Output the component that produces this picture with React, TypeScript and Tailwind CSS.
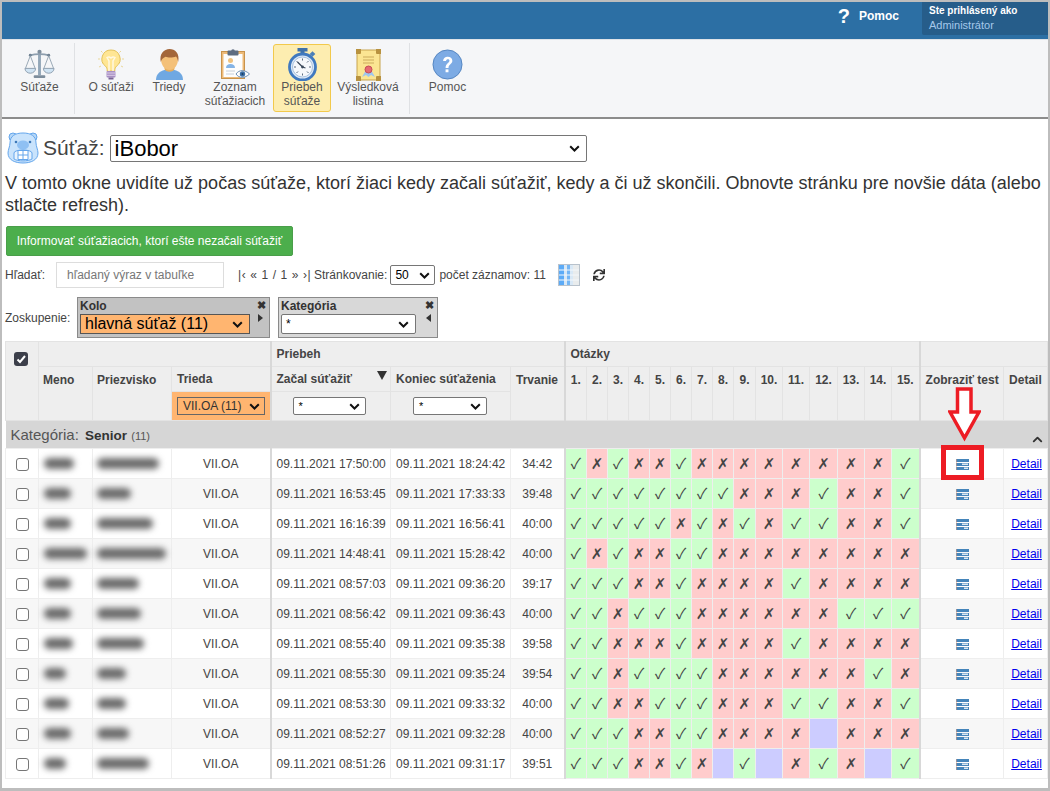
import React from "react";
import { ChevronUp } from "lucide-react";
import { FaSync } from "react-icons/fa";

const F = "font-['Liberation_Sans',Arial,sans-serif]";

type Row = { start: string; end: string; dur: string; a: string; n: number; s: number };
const rows: Row[] = [
  { start: "09.11.2021 17:50:00", end: "09.11.2021 18:24:42", dur: "34:42", a: "101001000000001", n: 30, s: 62 },
  { start: "09.11.2021 16:53:45", end: "09.11.2021 17:33:33", dur: "39:48", a: "111111110001001", n: 27, s: 34 },
  { start: "09.11.2021 16:16:39", end: "09.11.2021 16:56:41", dur: "40:00", a: "111110101011001", n: 27, s: 56 },
  { start: "09.11.2021 14:48:41", end: "09.11.2021 15:28:42", dur: "40:00", a: "101001100000000", n: 43, s: 69 },
  { start: "09.11.2021 08:57:03", end: "09.11.2021 09:36:20", dur: "39:17", a: "111001000010000", n: 27, s: 42 },
  { start: "09.11.2021 08:56:42", end: "09.11.2021 09:36:43", dur: "40:00", a: "110111000000111", n: 27, s: 44 },
  { start: "09.11.2021 08:55:40", end: "09.11.2021 09:35:38", dur: "39:58", a: "110001000010000", n: 29, s: 47 },
  { start: "09.11.2021 08:55:30", end: "09.11.2021 09:35:24", dur: "39:54", a: "110111100000010", n: 22, s: 29 },
  { start: "09.11.2021 08:53:30", end: "09.11.2021 09:33:32", dur: "40:00", a: "110011100011001", n: 25, s: 29 },
  { start: "09.11.2021 08:52:27", end: "09.11.2021 09:32:28", dur: "40:00", a: "111001100002000", n: 27, s: 32 },
  { start: "09.11.2021 08:51:26", end: "09.11.2021 09:31:17", dur: "39:51", a: "111001021201021", n: 22, s: 52 },
];

const qWidths = [22, 21, 21, 21, 21, 21, 21, 21, 22, 27, 27, 28, 27, 27, 28];

function Scales() {
  return (
    <svg width="31" height="31" viewBox="0 0 32 32">
      <rect x="14.500" y="3" width="3" height="24" fill="#93a7b8" />
      <rect x="10" y="27" width="12" height="3" rx="1" fill="#7d8d9c" />
      <circle cx="16" cy="3" r="2.200" fill="#7d8d9c" />
      <path d="M6 6.500 Q16 4 26 6.500" stroke="#8d9eae" strokeWidth="1.800" fill="none" />
      <circle cx="6.500" cy="6.500" r="1.500" fill="#6f8192" />
      <circle cx="25.500" cy="6.500" r="1.500" fill="#6f8192" />
      <path d="M6.500 7 1.500 20M6.500 7l5 13M25.500 7l-5 13M25.500 7l5 13" stroke="#8d9eae" strokeWidth="0.900" fill="none" />
      <path d="M1 20h11a5.500 5 0 0 1-11 0zM20 20h11a5.500 5 0 0 1-11 0z" fill="#cfe3f3" stroke="#8d9eae" />
    </svg>
  );
}
function Bulb() {
  return (
    <svg width="26" height="31" viewBox="0 0 26 31">
      <g stroke="#e9d79a" strokeWidth="1">
        <path d="M0 10h2M24 10h2M3 2l1.500 1.500M23 2l-1.500 1.500M1 18l2-1M25 18l-2-1" />
      </g>
      <path d="M13 1a9 9 0 0 0-5.500 16.200c1.300 1.200 1.700 2.800 1.700 4.800h7.600c0-2 .4-3.600 1.700-4.800A9 9 0 0 0 13 1z" fill="#ffe694" stroke="#e4c25a" />
      <path d="M11 22V12L9 8.500c1.500-1 2.500-1 4 .5 1.500-1.500 2.500-1.500 4-.5L15 12v10" stroke="#fff8e0" strokeWidth="1.500" fill="none" />
      <rect x="8.500" y="22" width="9" height="6.500" rx="1" fill="#a88fc4" />
      <path d="M8.500 24h9M8.500 26.300h9" stroke="#dccfe8" />
      <rect x="10.500" y="28.500" width="5" height="2" fill="#7a6496" />
    </svg>
  );
}
function Person() {
  return (
    <svg width="27" height="32" viewBox="0 0 27 32">
      <path d="M0 31c0-6 4-9 8.500-10h10C23 22 27 25 27 31z" fill="#6fa8e2" />
      <path d="M8.500 20c1 3.500 9 3.500 10 0v-3h-10z" fill="#e6ad5c" />
      <path d="M5 10C5 5 8.500 2 13.500 2S22 5 22 10c0 6-3.500 11-8.500 11S5 16 5 10z" fill="#f4c078" />
      <path d="M4.800 13C3 5 8 0 13.500 0S24 4 22.200 13c-.5-2.500-1-4.500-2.200-5.500-3 1.300-8 1.300-10.500.3C7 9 5.500 10.500 4.800 13z" fill="#a3663a" />
    </svg>
  );
}
function Clip() {
  return (
    <svg width="29" height="31" viewBox="0 0 29 31">
      <rect x="0.500" y="2.500" width="23" height="27" fill="#edba78" stroke="#c8934c" />
      <rect x="2.500" y="5" width="19" height="23" fill="#fdfdfd" />
      <rect x="6.500" y="1.500" width="11" height="5" rx="1" fill="#5d6c80" />
      <circle cx="12" cy="2" r="1.800" fill="#5d6c80" />
      <circle cx="9.500" cy="11.500" r="2.500" fill="#efc27f" />
      <path d="M5 19c0-3 2-4 4.500-4s4.500 1 4.500 4z" fill="#85b4e6" />
      <path d="M5 22h9M5 25h8" stroke="#c8d0da" />
      <path d="M15 25c3-4.500 9-4.500 13.500 0-4.500 4.500-10.500 4.500-13.500 0z" fill="#fff" stroke="#6b8fb6" />
      <circle cx="21.500" cy="25" r="2.700" fill="#3a6ea5" />
      <circle cx="21.500" cy="25" r="1" fill="#1d3b5f" />
    </svg>
  );
}
function Watch() {
  return (
    <svg width="29" height="33" viewBox="0 0 29 33">
      <rect x="9.500" y="0" width="10" height="3.500" fill="#3f71aa" />
      <rect x="12.500" y="3" width="4" height="3.500" fill="#3f71aa" />
      <rect x="22.500" y="4" width="4" height="4" transform="rotate(45 24.500 6)" fill="#4a7fb8" />
      <circle cx="14.500" cy="19" r="13" fill="#dbe7f5" stroke="#4079bf" strokeWidth="2.800" />
      <circle cx="14.500" cy="19" r="10" fill="#f6f8fb" stroke="#a9c2df" />
      <path d="M14.500 10.500v2M14.500 25.500v2M6 19h2M21 19h2M8.500 13l1.500 1.500M20.500 13 19 14.500M8.500 25l1.500-1.500M20.500 25 19 23.500" stroke="#5b6b80" />
      <path d="M9.500 14l5 5 3 1" stroke="#3c4a5c" strokeWidth="1.300" fill="none" />
      <circle cx="14.500" cy="19" r="1.400" fill="#3c4a5c" />
    </svg>
  );
}
function Cert() {
  return (
    <svg width="25" height="32" viewBox="0 0 25 32">
      <rect x="1" y="1" width="23" height="30" fill="#fbe592" stroke="#c8a34e" />
      <path d="M0 0h5v4a1 1 0 0 1-1 1H0zM25 0h-5v4a1 1 0 0 0 1 1h4zM0 32h5v-4a1 1 0 0 0-1-1H0zM25 32h-5v-4a1 1 0 0 1 1-1h4z" fill="#b8923f" />
      <path d="M7 8h11M7 11h11M7 14h11" stroke="#cbab5c" strokeWidth="1.200" />
      <path d="M6 28l4-7h5l4 7-4-2-2.500 2-2.500-2z" fill="#9fc6ee" />
      <circle cx="12.500" cy="20.500" r="3.500" fill="#e66a72" stroke="#c64c57" />
    </svg>
  );
}
function Help() {
  return (
    <svg width="31" height="31" viewBox="0 0 32 32">
      <circle cx="16" cy="16" r="15" fill="#7dabe4" stroke="#5484c0" />
      <path d="M11.500 12.500c0-6 9.500-6 9.500-.5 0 3.500-4 3.500-4 7.500h-3c0-5 4-5 4-7.500 0-2-3.500-2-3.500.5z" fill="#fff" />
      <rect x="14" y="21" width="3" height="3" fill="#fff" />
    </svg>
  );
}
function Beaver() {
  return (
    <svg width="32" height="32" viewBox="0 0 32 32">
      <circle cx="6" cy="5" r="4" fill="#b5d7f8" stroke="#64a6ec" />
      <circle cx="26" cy="5" r="4" fill="#b5d7f8" stroke="#64a6ec" />
      <path d="M16 1c8 0 13 3 13 10 0 3 2 7 2 10 0 7-7 10-15 10S1 28 1 21c0-3 2-7 2-10C3 4 8 1 16 1z" fill="#c9e3fc" stroke="#64a6ec" />
      <ellipse cx="16" cy="13" rx="6" ry="4.500" fill="#8fc0f3" />
      <circle cx="9" cy="10" r="1.300" fill="#3d78b8" />
      <circle cx="23" cy="10" r="1.300" fill="#3d78b8" />
      <path d="M7 21c0-4 18-4 18 0v6c-4 2.500-14 2.500-18 0z" fill="#e8f3fe" stroke="#64a6ec" />
      <path d="M11 18.500h10v9H11zM16 18.500v9M11 23h10" fill="#fff" stroke="#64a6ec" />
    </svg>
  );
}
function TestIcon() {
  return (
    <svg width="13" height="11" viewBox="0 0 13 11" className="ml-[2px] inline-block">
      <rect x="0" y="0" width="13" height="3" fill="#4585ba" />
      <rect x="0" y="4" width="13" height="3" fill="#4585ba" />
      <rect x="0" y="8" width="13" height="3" fill="#4585ba" />
      <rect x="6" y="4.500" width="6" height="1.500" fill="#dbe8f2" />
      <rect x="8" y="8.500" width="4" height="1.500" fill="#dbe8f2" />
      <rect x="0" y="0" width="1" height="11" fill="#e8a07c" opacity="0.5" />
    </svg>
  );
}
function ColumnsIcon() {
  return (
    <svg className="ml-[12px]" width="22" height="22" viewBox="0 0 22 22">
      <rect width="22" height="22" fill="#b8c2cc" />
      <rect x="1" y="1" width="5" height="20" fill="#5cabf7" />
      <rect x="6" y="1" width="3" height="20" fill="#d8e8f6" />
      <rect x="9" y="1" width="3" height="20" fill="#74b6f5" />
      <rect x="12" y="1" width="3" height="20" fill="#d8e8f6" />
      <rect x="15" y="1" width="6" height="20" fill="#e9eced" />
      <path d="M1 6h20M1 11h20M1 16h20" stroke="#f3f7fb" strokeWidth="1" />
    </svg>
  );
}
function ToolItem({ icon, label, active }: { icon: React.ReactNode; label: React.ReactNode; active?: boolean }) {
  return (
    <div
      className={`flex h-[68px] flex-col items-center rounded-[3px] border pt-[4px] text-center text-[12px] leading-[14px] text-[#555] ${
        active ? "border-[#f2c94c] bg-[#fdedb0]" : "border-transparent"
      }`}
    >
      <div className="flex h-[31px] items-center justify-center">{icon}</div>
      <div>{label}</div>
    </div>
  );
}
function Sel({ text, cls }: { text: string; cls: string }) {
  return (
    <div className={`flex items-center justify-between whitespace-nowrap ${cls}`}>
      <span>{text}</span>
      <svg width="11" height="7" viewBox="0 0 11 7" className="shrink-0">
        <path d="M1.200 1.200 5.500 5.500 9.800 1.200" stroke="#111" strokeWidth="2" fill="none" />
      </svg>
    </div>
  );
}
const Tri = ({ d }: { d: string }) => (
  <svg width="6" height="8" viewBox="0 0 6 8"><path d={d} fill="#333" /></svg>
);

const thBase = "border border-[#e3e3e3] bg-[#eeeeee] font-bold text-[12px] text-[#444]";
const thH = `${thBase} px-[5px] text-left align-top`;
const thM = `${thBase} px-[5px] text-left align-middle`;
const thick = "border-l-[2px] border-l-[#d8d8d8]";

export default function App() {
  return (
    <div className={`${F} flex h-[791px] w-[1050px] flex-col overflow-hidden border-t-[2px] border-r-[2px] border-b-[3px] border-l-[2px] border-[#bdbdbd] bg-white text-[#333]`}>
      <header className="flex h-[37px] shrink-0 justify-end bg-[#2c6fa4]">
        <div className="mr-[23px] flex h-[27px] items-center gap-[9px] text-white">
          <span className="text-[20px] font-bold leading-none">?</span>
          <span className="text-[12px] font-bold">Pomoc</span>
        </div>
        <div className="h-[33px] w-[126px] rounded-bl-[2px] bg-[#265d8a] pl-[7px] pt-[1px] text-[10px] leading-[15px]">
          <div className="font-bold text-white">Ste prihlásený ako</div>
          <div className="text-[11px] font-normal text-[#a5c8ea]">Administrátor</div>
        </div>
      </header>
      <nav className="flex h-[80px] shrink-0 items-start border-t border-b-2 border-t-[#dfe3e8] border-b-[#8c8c8c] bg-[#f5f6f8] pt-[4px]">
        <div className="-mt-[1px] h-[71px] w-[73px] border-r border-[#dfe1e4] pl-[3px] pt-[1px]">
          <ToolItem icon={<Scales />} label="Súťaže" />
        </div>
        <div className="ml-[10px] w-[52px]"><ToolItem icon={<Bulb />} label="O súťaži" /></div>
        <div className="ml-[7px] w-[50px]"><ToolItem icon={<Person />} label="Triedy" /></div>
        <div className="ml-[5px] w-[72px]"><ToolItem icon={<Clip />} label={<>Zoznam<br />súťažiacich</>} /></div>
        <div className="ml-[2px] w-[58px]"><ToolItem active icon={<Watch />} label={<>Priebeh<br />súťaže</>} /></div>
        <div className="ml-[4px] w-[66px]"><ToolItem icon={<Cert />} label={<>Výsledková<br />listina</>} /></div>
        <div className="-mt-[1px] ml-[8px] h-[71px] w-[76px] border-l border-[#dfe1e4] pt-[1px]">
          <ToolItem icon={<Help />} label="Pomoc" />
        </div>
      </nav>

      <main className="flex min-h-0 flex-1 flex-col pl-[3px]">
        <div className="mt-[14px] flex h-[30px] items-center pl-[2px]">
          <Beaver />
          <span className="ml-[4px] text-[21px] text-[#444]">Súťaž:</span>
          <Sel
            text="iBobor"
            cls="ml-[5px] h-[27px] w-[477px] rounded-[2px] border border-[#767676] bg-white pl-[4px] pr-[6px] text-[22px] text-black"
          />
        </div>
        <p className="mt-[9px] w-[1040px] text-[18px] leading-[22px] text-[#333]">
          V tomto okne uvidíte už počas súťaže, ktorí žiaci kedy začali súťažiť, kedy a či už skončili. Obnovte stránku pre novšie dáta (alebo stlačte refresh).
        </p>
        <div className="ml-[1px] mt-[10px]">
          <div className="flex h-[30px] w-[287px] items-center justify-center rounded-[2px] border border-[#4a9e4a] bg-[#4cae4c] text-[12px] font-normal text-white">
            Informovať súťažiacich, ktorí ešte nezačali súťažiť
          </div>
        </div>
        <div className="mt-[6px] flex h-[26px] items-center text-[12px] text-[#444]">
          <span className="w-[51px]">Hľadať:</span>
          <div className="flex h-[26px] w-[168px] items-center border border-[#dddddd] pl-[10px] text-[#777]">hľadaný výraz v tabuľke</div>
          <span className="ml-[14px] w-[71px] whitespace-nowrap tracking-[0.6px]">|‹ « 1 / 1 » ›|</span>
          <span className="ml-[5px]">Stránkovanie:</span>
          <Sel text="50" cls="ml-[3px] h-[20px] w-[45px] rounded-[2px] border border-[#767676] bg-white pl-[4px] pr-[4px] text-[12px] text-black" />
          <span className="ml-[4px]">počet záznamov: 11</span>
          <ColumnsIcon />
          <FaSync className="ml-[13px]" size={12} color="#333" />
        </div>
        <div className="mt-[9px] flex h-[41px] items-center text-[12px] text-[#444]">
          <span className="w-[72px]">Zoskupenie:</span>
          <div className="flex h-[41px] w-[193px] border border-[#8a8a8a] bg-[#c2c2c2]">
            <div className="flex-1 pl-[2px]">
              <div className="h-[16px] text-[12px] font-bold leading-[17px] text-[#333]">Kolo</div>
              <Sel text="hlavná súťaž (11)" cls="h-[20px] w-[170px] border border-[#555] bg-[#ffb570] pl-[4px] pr-[6px] text-[16px] text-black" />
            </div>
            <div className="flex w-[16px] flex-col items-center">
              <span className="text-[11px] font-bold leading-[15px] text-[#333]">✖</span>
              <span className="mt-[1px]"><Tri d="M0 0 5 4 0 8z" /></span>
            </div>
          </div>
          <div className="ml-[8px] flex h-[41px] w-[160px] border border-[#8a8a8a] bg-[#d8d8d8]">
            <div className="flex-1 pl-[2px]">
              <div className="h-[16px] text-[12px] font-bold leading-[17px] text-[#333]">Kategória</div>
              <Sel text="*" cls="h-[20px] w-[135px] rounded-[2px] border border-[#767676] bg-white pl-[4px] pr-[6px] text-[12px] text-black" />
            </div>
            <div className="flex w-[16px] flex-col items-center">
              <span className="text-[11px] font-bold leading-[15px] text-[#333]">✖</span>
              <span className="mt-[1px]"><Tri d="M5 0 0 4 5 8z" /></span>
            </div>
          </div>
        </div>

        <table className="mt-[3px] w-[1043px] table-fixed border-collapse text-[12px]">
          <colgroup>
            <col className="w-[33px]" />
            <col className="w-[54px]" />
            <col className="w-[79px]" />
            <col className="w-[99px]" />
            <col className="w-[120px]" />
            <col className="w-[120px]" />
            <col className="w-[54px]" />
            {qWidths.map((w, i) => (
              <col key={i} style={{ width: w }} />
            ))}
            <col className="w-[84px]" />
            <col className="w-[44px]" />
          </colgroup>
          <thead>
            <tr className="h-[25px]">
              <th rowSpan={3} className={`${thBase} pl-[8px] pt-[10px] text-left align-top`}>
                <span className="flex h-[14px] w-[14px] items-center justify-center rounded-[3px] bg-[#3c3f4a]">
                  <svg width="10" height="10" viewBox="0 0 10 10"><path d="M1.500 5.500 4 8l5-6" stroke="#fff" strokeWidth="2" fill="none" /></svg>
                </span>
              </th>
              <th colSpan={3} className={thH}></th>
              <th colSpan={3} className={`${thM} ${thick}`}>Priebeh</th>
              <th colSpan={15} className={`${thM} ${thick}`}>Otázky</th>
              <th colSpan={2} className={`${thH} ${thick}`}></th>
            </tr>
            <tr className="h-[25px]">
              <th rowSpan={2} className={`${thBase} pl-[4px] pt-[4px] text-left align-top`}>Meno</th>
              <th rowSpan={2} className={`${thBase} pl-[4px] pt-[4px] text-left align-top`}>Priezvisko</th>
              <th className={thM}>Trieda</th>
              <th className={`${thM} relative ${thick}`}>
                Začal súťažiť
                <svg className="absolute right-[3px] top-[4px]" width="10" height="9" viewBox="0 0 10 9"><path d="M0 0h10L5 9z" fill="#333" /></svg>
              </th>
              <th className={thM}>Koniec súťaženia</th>
              <th rowSpan={2} className={`${thH} pt-[4px]`}>Trvanie</th>
              {qWidths.map((_, i) => (
                <th key={i} rowSpan={2} className={`${thBase} pt-[4px] text-center align-top ${i === 0 ? thick : ""}`}>{i + 1}.</th>
              ))}
              <th rowSpan={2} className={`${thH} whitespace-nowrap pt-[4px] ${thick}`}>Zobraziť test</th>
              <th rowSpan={2} className={`${thH} pt-[4px]`}>Detail</th>
            </tr>
            <tr className="h-[29px]">
              <th className="border border-[#e3e3e3] bg-[#ffb570] p-0 pl-[5px]">
                <Sel text="VII.OA (11)" cls="h-[18px] w-[88px] border border-[#666] bg-[#ffb570] pl-[5px] pr-[4px] text-[12px] font-normal text-[#333]" />
              </th>
              <th className={`border border-[#e3e3e3] ${thick} bg-[#eeeeee] p-0 pl-[21px]`}>
                <Sel text="*" cls="h-[18px] w-[73px] rounded-[2px] border border-[#767676] bg-white pl-[5px] pr-[5px] text-[11px] font-normal text-black" />
              </th>
              <th className="border border-[#e3e3e3] bg-[#eeeeee] p-0 pl-[22px]">
                <Sel text="*" cls="h-[18px] w-[74px] rounded-[2px] border border-[#767676] bg-white pl-[5px] pr-[5px] text-[11px] font-normal text-black" />
              </th>
            </tr>
          </thead>
          <tbody>
            <tr className="h-[28px] bg-[#d6d6d6]">
              <td colSpan={24} className="relative pl-[5px] pt-[2px] text-[15px] text-[#555]">
                Kategória: <b className="ml-[2px] text-[13.500px] text-[#333]">Senior</b> <span className="text-[11px]">(11)</span>
                <ChevronUp className="absolute bottom-[1px] right-[3px]" size={15} strokeWidth={3} color="#333" />
              </td>
            </tr>
            {rows.map((r, i) => {
              const rowBg = i % 2 === 0 ? "bg-white" : "bg-[#f7f7f7]";
              return (
                <tr key={i} className={`h-[30px] ${rowBg}`}>
                  <td className="border border-[#eeeeee] text-center">
                    <span className="inline-block h-[13px] w-[13px] rounded-[3px] border border-[#767676] bg-white align-middle" />
                  </td>
                  <td className="border border-[#eeeeee] pl-[5px]">
                    <div style={{ width: r.n }} className="h-[11px] rounded-full bg-[#6a6a6a] blur-[3px]" />
                  </td>
                  <td className="border border-[#eeeeee] pl-[4px]">
                    <div style={{ width: r.s }} className="h-[11px] rounded-full bg-[#6a6a6a] blur-[3px]" />
                  </td>
                  <td className="border border-[#eeeeee] text-center text-[#444]">VII.OA</td>
                  <td className={`whitespace-nowrap border border-[#eeeeee] ${thick} pl-[5px] text-[#444]`}>{r.start}</td>
                  <td className="whitespace-nowrap border border-[#eeeeee] pl-[5px] text-[#444]">{r.end}</td>
                  <td className="border border-[#eeeeee] text-center text-[#444]">{r.dur}</td>
                  {r.a.split("").map((c, j) => (
                    <td
                      key={j}
                      className={`border border-[#eeeeee] p-0 text-center font-['Noto_Sans_CJK_JP','DejaVu_Sans',sans-serif] text-[15px] text-[#444] ${j === 0 ? thick : ""} ${
                        c === "1" ? "bg-[#ccffcc]" : c === "0" ? "bg-[#ffcccc]" : "bg-[#ccccff]"
                      }`}
                    >
                      {c === "1" ? "✓" : c === "0" ? "✗" : ""}
                    </td>
                  ))}
                  <td className={`border border-[#eeeeee] ${thick} text-center`}>
                    <TestIcon />
                  </td>
                  <td className="border border-[#eeeeee] pl-[2px] text-center">
                    <a href="#" className="text-[#0000ee] underline">Detail</a>
                  </td>
                </tr>
              );
            })}
          </tbody>
        </table>
      </main>

      <div className="pointer-events-none absolute left-[941px] top-[445px] h-[35px] w-[43px] border-[5px] border-[#ed1c24]" />
      <svg className="pointer-events-none absolute left-[948px] top-[387px]" width="33" height="55" viewBox="0 0 33 55">
        <path d="M9.500 2H23v23h8L16.500 51 2 25h7.500z" fill="#fff" stroke="#ed1c24" strokeWidth="3.500" />
      </svg>
    </div>
  );
}
